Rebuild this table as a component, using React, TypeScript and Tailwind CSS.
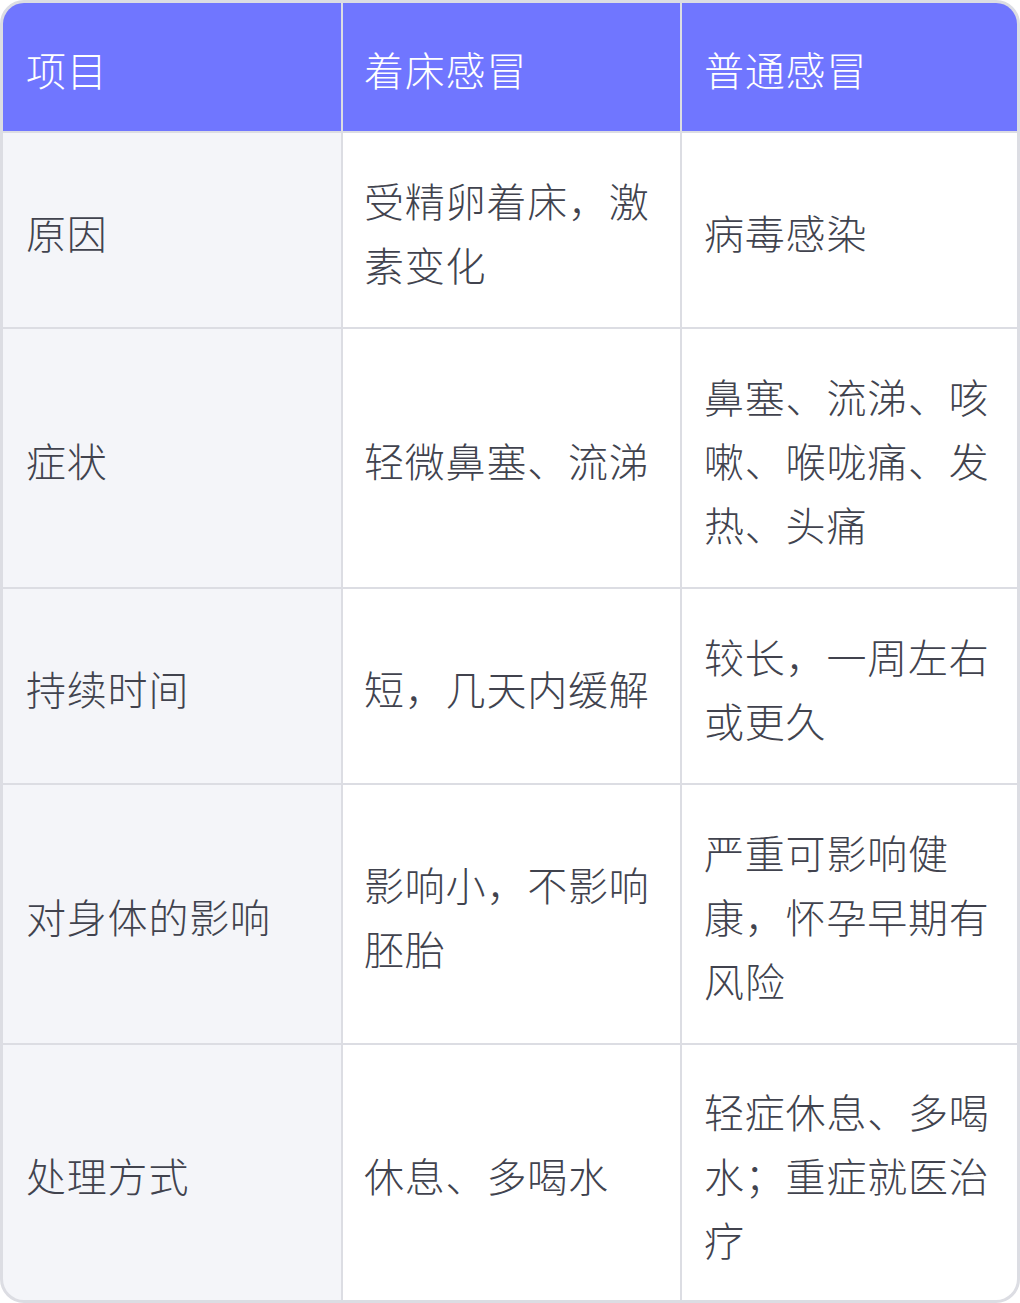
const rows: [string, string, string][] = [
  ["原因", "受精卵着床，激素变化", "病毒感染"],
  ["症状", "轻微鼻塞、流涕", "鼻塞、流涕、咳嗽、喉咙痛、发热、头痛"],
  ["持续时间", "短，几天内缓解", "较长，一周左右或更久"],
  ["对身体的影响", "影响小，不影响胚胎", "严重可影响健康，怀孕早期有风险"],
  ["处理方式", "休息、多喝水", "轻症休息、多喝水；重症就医治疗"],
];

const headers = ["项目", "着床感冒", "普通感冒"];

export default function App() {
  return (
    <div
      className="w-[1020px] h-[1303px] bg-white"
      style={{ fontFamily: '"Noto Sans CJK SC", "Noto Sans", sans-serif' }}
    >
      <div className="overflow-hidden rounded-[24px] border-[3px] border-[#dcdde3] bg-[#dcdde3]">
        <div className="grid grid-cols-[338px_337px_335px] gap-[2px] text-[40px] leading-[64px] font-light tracking-[0.8px]">
          <div className="bg-[#7076ff] pl-[23px] pr-[20px] pt-[34px] pb-[30px] text-white">{headers[0]}</div>
          <div className="bg-[#7076ff] pl-[21px] pr-[20px] pt-[34px] pb-[30px] text-white">{headers[1]}</div>
          <div className="bg-[#7076ff] pl-[22px] pr-[20px] pt-[34px] pb-[30px] text-white">{headers[2]}</div>
          {rows.map((r, i) => (
            <Row key={r[0]} cells={r} last={i === rows.length - 1} />
          ))}
        </div>
      </div>
    </div>
  );
}

function Row({ cells, last }: { cells: [string, string, string]; last: boolean }) {
  const pad = last ? "pt-[34px] pb-[29px]" : "pt-[35px] pb-[31px]";
  return (
    <>
      <div className={`flex items-center bg-[#f4f5f9] pl-[23px] pr-[20px] text-[#41434e] ${pad}`}>
        {cells[0]}
      </div>
      <div className={`flex items-center bg-white pl-[21px] pr-[20px] text-[#41434e] ${pad}`}>
        {cells[1]}
      </div>
      <div className={`flex items-center bg-white pl-[22px] pr-[20px] text-[#41434e] ${pad}`}>
        {cells[2]}
      </div>
    </>
  );
}
